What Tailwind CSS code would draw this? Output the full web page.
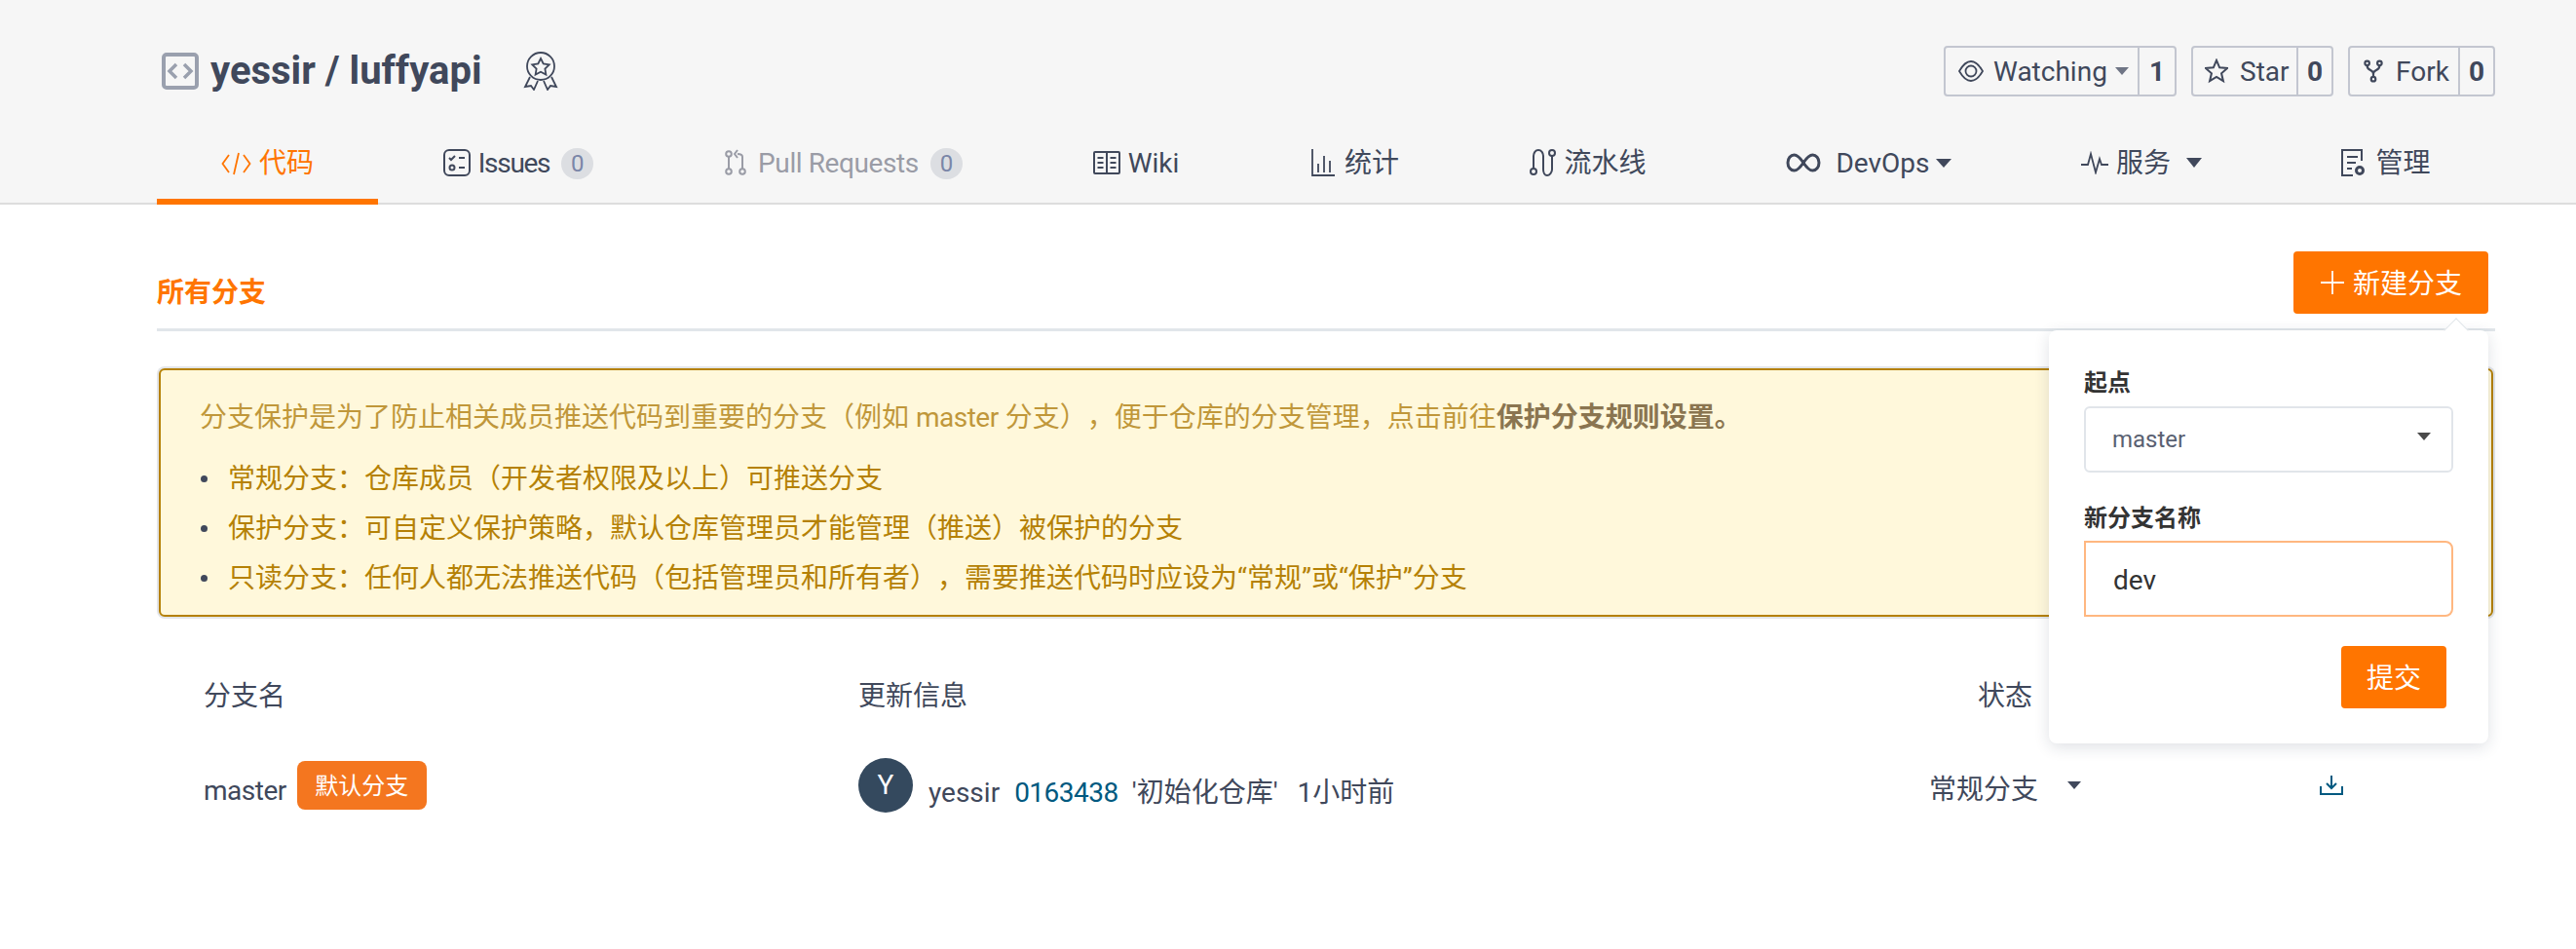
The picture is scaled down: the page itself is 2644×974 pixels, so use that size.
<!doctype html>
<html lang="zh"><head><meta charset="utf-8"><script src="https://cdn.jsdelivr.net/npm/@tailwindcss/browser@4"></script></head>
<body class="m-0 bg-white font-['Roboto','Noto_Sans_CJK_SC',sans-serif] [text-spacing-trim:space-all] text-[#40485b] text-[28px] leading-[40px]">
<div class="relative w-[2644px] h-[974px] overflow-hidden">
<header class="h-[210px] bg-[#f6f6f6] border-b-2 border-[#dddddd] flex flex-col">
  <div class="pl-[161px] pr-[83px] pt-[47px] h-[146px] flex items-start justify-between">
    <div class="flex items-center h-[52px] pl-[5px]">
      <svg class="w-[38px] h-[38px]" viewBox="0 0 38 38" fill="none"><rect x="2" y="2" width="34" height="34" rx="3" stroke="#9aa0ae" stroke-width="4"/><path d="M15 12l-7 7 7 7M23 12l7 7-7 7" stroke="#9aa0ae" stroke-width="3.500"/></svg>
      <h1 class="ml-[12px] w-[290px] whitespace-nowrap text-[40px] leading-[52px] font-bold text-[#40485b]">yessir / luffyapi</h1>
      <svg class="ml-[31px] w-[36px] h-[40px]" viewBox="0 0 36 40" fill="none" stroke="#40485b" stroke-width="1.800"><circle cx="18" cy="15" r="14"/><path d="M18 7l2.700 5.500 6 .9-4.300 4.200 1 6-5.400-2.800-5.400 2.800 1-6-4.300-4.200 6-.9z"/><path d="M7 26L2 36l6-1 3 4 4-9M29 26l5 10-6-1-3 4-4-9"/></svg>
    </div>
    <div class="flex gap-[15px] text-[#40485b]">
      <div class="flex h-[52px] w-[239px] border-2 border-[#c3c6d0] rounded-[4px]">
        <div class="w-[197px] flex items-center pl-[13px]">
          <svg class="w-[26px] h-[24px] shrink-0" viewBox="0 0 26 24" fill="none" stroke="#40485b" stroke-width="1.800"><path d="M1 12C5 5 9 2 13 2s8 3 12 10c-4 7-8 10-12 10S5 19 1 12z"/><circle cx="13" cy="12" r="5.500"/></svg>
          <span class="ml-[10px] pt-[2px]">Watching</span>
          <span class="ml-[8px] w-0 h-0 border-x-[7px] border-x-transparent border-t-[8px] border-t-[#6f7585]"></span>
        </div>
        <div class="flex-1 border-l-2 border-[#c3c6d0] flex items-center justify-center font-bold pt-[2px]">1</div>
      </div>
      <div class="flex h-[52px] w-[146px] border-2 border-[#c3c6d0] rounded-[4px]">
        <div class="w-[106px] flex items-center pl-[12px]">
          <svg class="w-[24px] h-[26px] shrink-0" viewBox="0 0 26 28" fill="none" stroke="#40485b" stroke-width="2.200"><path d="M13 2l3.400 8 8.600.800-6.500 5.700 2 8.500-7.500-4.500L5.500 25l2-8.500L1 10.800 9.600 10z"/></svg>
          <span class="ml-[12px] pt-[2px]">Star</span>
        </div>
        <div class="flex-1 border-l-2 border-[#c3c6d0] flex items-center justify-center font-bold pt-[2px]">0</div>
      </div>
      <div class="flex h-[52px] w-[151px] border-2 border-[#c3c6d0] rounded-[4px]">
        <div class="w-[111px] flex items-center pl-[14px]">
          <svg class="w-[20px] h-[26px] shrink-0" viewBox="0 0 22 28" fill="none" stroke="#40485b" stroke-width="2.400"><circle cx="4" cy="5" r="2.500"/><circle cx="18" cy="5" r="2.500"/><circle cx="11" cy="23" r="2.500"/><path d="M4 8c0 6 7 4 7 9v3M18 8c0 6-7 4-7 9"/></svg>
          <span class="ml-[13px] pt-[2px]">Fork</span>
        </div>
        <div class="flex-1 border-l-2 border-[#c3c6d0] flex items-center justify-center font-bold pt-[2px]">0</div>
      </div>
    </div>
  </div>
  <nav class="pl-[161px] flex h-[62px] text-[28px]">
    <a class="w-[227px] h-[64px] flex items-center justify-center pb-[15px] gap-[8px] border-b-[6px] border-[#ff7500] text-[#ff7500]">
      <svg class="w-[31px] h-[24px]" viewBox="0 0 31 24" fill="none" stroke="#ff7500" stroke-width="1.800"><path d="M8 3L1.500 12 8 21M23 3l6.500 9L23 21M18 1l-5 22"/></svg><span>代码</span></a>
    <a class="w-[288px] flex items-center justify-center pb-[18px]">
      <svg class="w-[28px] h-[28px] mb-[2px]" viewBox="0 0 28 28" fill="none" stroke="#40485b" stroke-width="2"><rect x="1" y="1" width="26" height="26" rx="5"/><path d="M6 9l2 2 4-4M16 9h6M16 19h6" /><circle cx="9" cy="19" r="2.500"/></svg>
      <span class="ml-[8px] tracking-[-1.300px]">Issues</span><span class="ml-[12px] w-[33px] h-[32px] rounded-full bg-[#dcdee2] text-[#7a86a8] text-[24px] flex items-center justify-center">0</span></a>
    <a class="w-[380px] flex items-center justify-center pb-[18px] text-[#9a9ca6]">
      <svg class="w-[22px] h-[28px] mb-[2px]" viewBox="0 0 22 28" fill="none" stroke="#9a9ca6" stroke-width="2"><circle cx="4" cy="5" r="2.800"/><circle cx="4" cy="23" r="2.800"/><circle cx="18" cy="23" r="2.800"/><path d="M4 8v12M18 20V8c0-2-2-3-5-3M13 1l-3 4 3 4"/></svg>
      <span class="ml-[12px] tracking-[-0.400px]">Pull Requests</span><span class="ml-[12px] w-[33px] h-[32px] rounded-full bg-[#dcdee2] text-[#7a86a8] text-[24px] flex items-center justify-center">0</span></a>
    <a class="w-[220px] flex items-center justify-center pb-[18px]">
      <svg class="w-[28px] h-[24px] mb-[2px]" viewBox="0 0 28 24" fill="none" stroke="#40485b" stroke-width="2"><rect x="1" y="1" width="26" height="22" rx="1"/><path d="M14 1v22M4.500 7h6M4.500 12h6M4.500 17h6M17.500 7h6M17.500 12h6M17.500 17h6"/></svg>
      <span class="ml-[8px]">Wiki</span></a>
    <a class="w-[230px] flex items-center justify-center pb-[18px]">
      <svg class="w-[24px] h-[28px] mb-[2px]" viewBox="0 0 24 28" fill="none" stroke="#40485b" stroke-width="1.800"><path d="M1 0v27h23M7 24V15M13 24V7M19 24V12"/></svg>
      <span class="ml-[10px]">统计</span></a>
    <a class="w-[248px] flex items-center justify-center pb-[18px]">
      <svg class="w-[27px] h-[30px] mb-[2px]" viewBox="0 0 27 30" fill="none" stroke="#40485b" stroke-width="2"><circle cx="4" cy="24" r="3"/><circle cx="23" cy="5" r="3"/><path d="M4 21V8c0-3 2-6 5-6s5 3 5 6v14c0 3 1.500 6 4 6s5-3 5-6V8"/></svg>
      <span class="ml-[8px]">流水线</span></a>
    <a class="w-[328px] flex items-center justify-center pb-[18px]">
      <svg class="w-[36px] h-[20px] mb-[2px]" viewBox="0 0 36 20" fill="none" stroke="#40485b" stroke-width="3"><path d="M18 10C14 4 11 2 8.500 2 5 2 2 5.500 2 10s3 8 6.500 8c2.500 0 5.500-2 9.500-8s7-8 9.500-8C31 2 34 5.500 34 10s-3 8-6.500 8c-2.500 0-5.500-2-9.500-8z"/></svg>
      <span class="ml-[15px]">DevOps</span><span class="ml-[6px] mb-[2px] w-0 h-0 border-x-[8px] border-x-transparent border-t-[9px] border-t-[#40485b]"></span></a>
    <a class="w-[232px] flex items-center justify-center pb-[18px]">
      <svg class="w-[28px] h-[24px] mb-[2px]" viewBox="0 0 28 24" fill="none" stroke="#40485b" stroke-width="1.800"><path d="M0 14h7l3-11 5 19 4-14 2 6h7"/></svg>
      <span class="ml-[8px]">服务</span><span class="ml-[16px] mb-[2px] w-0 h-0 border-x-[8px] border-x-transparent border-t-[10px] border-t-[#40485b]"></span></a>
    <a class="w-[270px] flex items-center justify-center pb-[18px]">
      <svg class="w-[24px] h-[30px] mb-[2px]" viewBox="0 0 24 30" fill="none" stroke="#40485b" stroke-width="2"><path d="M21 13V2H1v26h11M6 9h11M6 15h9M6 21h5"/><circle cx="19" cy="23" r="3.500" stroke-width="3"/></svg>
      <span class="ml-[11px]">管理</span></a>
  </nav>
</header>
<main class="pl-[161px] w-[2561px]">
  <div class="h-[130px] border-b-[3px] border-[#e1e6ea] flex items-start justify-between relative">
    <h2 class="mt-[71px] text-[28px] leading-[40px] font-bold text-[#ff7500]">所有分支</h2>
    <button class="mt-[48px] mr-[7px] h-[64px] w-[200px] rounded-[4px] bg-[#ff7500] text-white text-[28px] flex items-center pl-[28px]">
      <svg class="w-[24px] h-[24px]" viewBox="0 0 24 24" fill="none" stroke="#fff" stroke-width="1.800"><path d="M12 0v24M0 12h24"/></svg><span class="ml-[9px] pt-[4px]">新建分支</span></button>
  </div>
  <section class="mt-[38px] mx-[2px] h-[255px] bg-[#fff8db] border-2 border-[#b58105] rounded-[6px] shadow-[0_0_0_2px_#e3e5e8] text-[#b58105] pl-[40px] pt-[29px]">
    <p class="leading-[40px] text-[#c0973a]">分支保护是为了防止相关成员推送代码到重要的分支（例如 <span class="tracking-[-0.500px]">master</span> 分支），便于仓库的分支管理，点击前往<b class="text-[#8a7550] font-bold">保护分支规则设置。</b></p>
    <ul class="mt-[17px] leading-[51px]">
      <li class="flex items-center"><i class="w-[7px] h-[7px] rounded-full bg-[#40485b] mr-[21px] ml-[1px]"></i>常规分支：仓库成员（开发者权限及以上）可推送分支</li>
      <li class="flex items-center"><i class="w-[7px] h-[7px] rounded-full bg-[#40485b] mr-[21px] ml-[1px]"></i>保护分支：可自定义保护策略，默认仓库管理员才能管理（推送）被保护的分支</li>
      <li class="flex items-center"><i class="w-[7px] h-[7px] rounded-full bg-[#40485b] mr-[21px] ml-[1px]"></i>只读分支：任何人都无法推送代码（包括管理员和所有者），需要推送代码时应设为“常规”或“保护”分支</li>
    </ul>
  </section>
  <div class="mt-[62px] pl-[48px] flex items-center h-[40px]">
    <div class="w-[672px]">分支名</div><div class="w-[1099px]">更新信息</div><div class="w-[156px] text-center">状态</div>
  </div>
  <div class="mt-[43px] pl-[48px] flex items-center h-[56px]">
    <div class="w-[672px] flex items-center"><span class="pt-[11px] tracking-[-0.500px]">master</span><span class="ml-[11px] w-[133px] h-[50px] rounded-[8px] bg-[#f4761f] text-white text-[24px] flex items-center justify-center pt-[2px]">默认分支</span></div>
    <div class="w-[1099px] flex items-center">
      <span class="w-[56px] h-[56px] rounded-full bg-[#34495e] text-white flex items-center justify-center">Y</span>
      <span class="ml-[16px] pt-[15px]">yessir</span><a class="ml-[15px] pt-[15px] tracking-[-0.500px] text-[#005980]">0163438</a><span class="ml-[14px] pt-[15px]">'初始化仓库'</span><span class="ml-[20px] pt-[15px]">1小时前</span>
    </div>
    <div class="w-[156px] flex items-center justify-between"><span class="pt-[10px]">常规分支</span><span class="w-0 h-0 border-x-[7px] border-x-transparent border-t-[8px] border-t-[#40485b]"></span></div>
    <svg class="ml-[245px] w-[24px] h-[20px]" viewBox="0 0 24 20" fill="none" stroke="#005980" stroke-width="2"><path d="M12 0v12M7 8l5 5 5-5"/><path d="M1 11v8h22v-8"/></svg>
  </div>
</main>
<div class="absolute left-[2103px] top-[339px] w-[451px] h-[424px] bg-white rounded-[8px] shadow-[0_4px_16px_rgba(30,40,70,0.14)] pt-[34px] px-[36px]">
  <div class="absolute -top-[9px] left-[409px] w-[18px] h-[18px] rotate-45 bg-white border-l border-t border-[#e1e6ea]"></div>
  <label class="block text-[24px] leading-[40px] font-bold text-[#333333]">起点</label>
  <div class="mt-[4px] h-[68px] border-2 border-[#e1e5ea] rounded-[6px] flex items-center justify-between pl-[27px] pr-[21px] text-[24px] text-[#5a6172]"><span class="font-normal">master</span><span class="mb-[6px] w-0 h-0 border-x-[7px] border-x-transparent border-t-[8px] border-t-[#4a4a4a]"></span></div>
  <label class="block mt-[27px] text-[24px] leading-[40px] font-bold text-[#333333]">新分支名称</label>
  <input value="dev" class="block mt-[3px] w-[379px] h-[78px] border-2 border-[#ffb780] rounded-r-[8px] pl-[28px] pt-[2px] text-[28px] text-[#333333] bg-white outline-none">
  <div class="mt-[30px] pr-[7px] flex justify-end"><button class="w-[108px] h-[64px] rounded-[4px] bg-[#ff7500] text-white text-[28px] pt-[4px]">提交</button></div>
</div>
</div>
</body></html>
